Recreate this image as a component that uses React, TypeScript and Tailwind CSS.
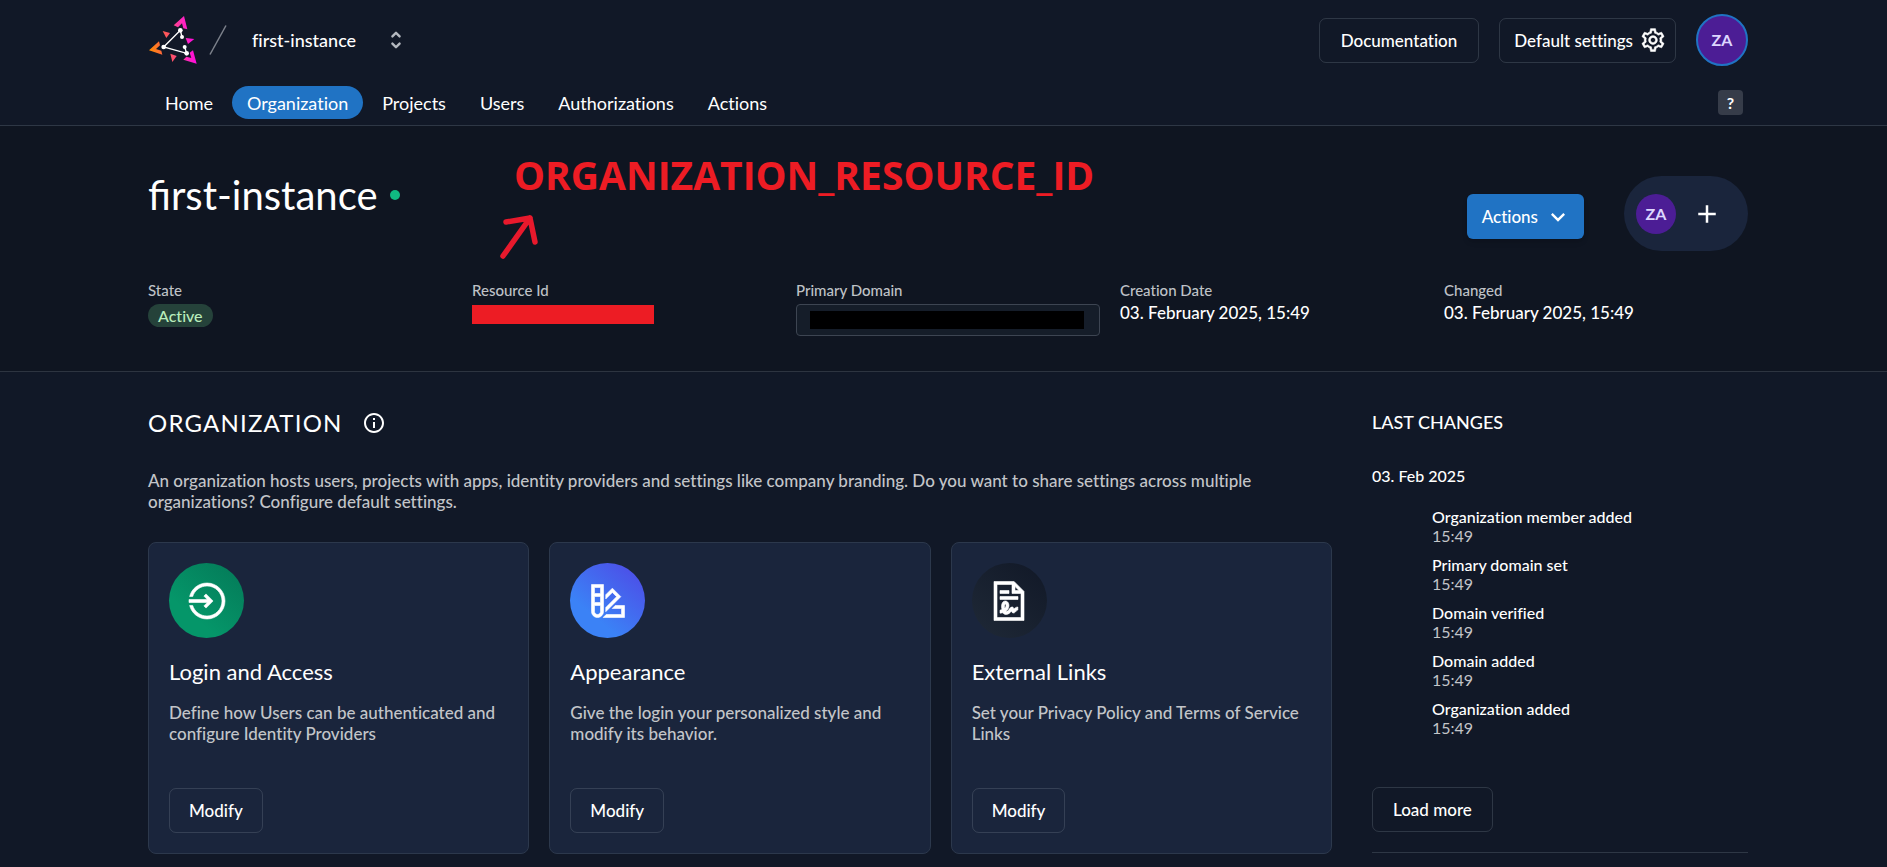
import React from "react";
import { HiSelector } from "react-icons/hi";
import {
  LiaCogSolid,
  LiaFileContractSolid,
  LiaSignInAltSolid,
  LiaSwatchbookSolid,
} from "react-icons/lia";
import { MdAdd, MdInfoOutline, MdKeyboardArrowDown } from "react-icons/md";

const navItems = ["Home", "Organization", "Projects", "Users", "Authorizations", "Actions"];

const changes = [
  "Organization member added",
  "Primary domain set",
  "Domain verified",
  "Domain added",
  "Organization added",
];

const cards = [
  {
    title: "Login and Access",
    text: "Define how Users can be authenticated and configure Identity Providers",
    icon: LiaSignInAltSolid,
    tone: "bg-linear-[40deg,#059669_30%,#047857]",
  },
  {
    title: "Appearance",
    text: "Give the login your personalized style and modify its behavior.",
    icon: LiaSwatchbookSolid,
    tone: "bg-linear-[40deg,#3b82f6_30%,#4f46e5]",
  },
  {
    title: "External Links",
    text: "Set your Privacy Policy and Terms of Service Links",
    icon: LiaFileContractSolid,
    tone: "bg-linear-[40deg,#1f2937,#111827]",
  },
];

function Container({ className = "", children }: { className?: string; children: React.ReactNode }) {
  return (
    <div className="pl-[9px]">
      <div className={`mx-auto w-full max-w-[1600px] ${className}`}>{children}</div>
    </div>
  );
}

function OutlineButton({ className = "px-[19px]", children }: { className?: string; children: React.ReactNode }) {
  return (
    <button
      type="button"
      className={`flex h-[45px] w-fit items-center rounded-[7px] border border-[#8795a1]/25 ${className}`}
    >
      {children}
    </button>
  );
}

function Logo() {
  return (
    <svg viewBox="55 45 150 150" className="size-[50px]" aria-hidden="true">
      <defs>
        <linearGradient id="brand" x1="58" y1="150" x2="201" y2="130" gradientUnits="userSpaceOnUse">
          <stop offset="0" stopColor="#ff8f00" />
          <stop offset="0.35" stopColor="#fe5a4f" />
          <stop offset="0.55" stopColor="#fe4a80" />
          <stop offset="0.75" stopColor="#fe2bb8" />
          <stop offset="1" stopColor="#ff00ea" />
        </linearGradient>
      </defs>
      <g fill="url(#brand)">
        <path d="M163 48 173 88 161 85 157 70 145 82 132 76Z" />
        <path d="M58 151 88 124 91 136 79 147 95 152 98 164Z" />
        <path d="M201 191 161 179 170 170 185 174 180 158 190 151Z" />
        <path d="M99 93 121 99 110 114Z" />
        <path d="M168 114 194 117 175 132Z" />
        <path d="M122 161 141 168 128 186Z" />
      </g>
      <path d="M157 111 152 91 102 141 171 160 165 141" fill="none" stroke="#fff" strokeWidth="4" />
      <g fill="#fff">
        <circle cx="152" cy="91" r="7" />
        <circle cx="157" cy="111" r="6" />
        <circle cx="165" cy="141" r="6" />
        <circle cx="171" cy="160" r="7" />
        <circle cx="102" cy="141" r="7" />
      </g>
    </svg>
  );
}

function Header() {
  return (
    <header className="border-b border-[#8795a1]/25">
      <Container>
        <div className="flex h-20 items-center justify-between">
          <div className="flex items-center">
            <a href="#home" aria-label="Home">
              <Logo />
            </a>
            <svg viewBox="0 0 18 30" className="ml-[11px] h-[30px] w-[18px]" aria-hidden="true">
              <path d="M1 29.500 17 .5" stroke="#7d828c" strokeWidth="1.500" />
            </svg>
            <button type="button" className="ml-[25px] flex items-center gap-7 text-lg">
              first-instance
              <HiSelector className="size-6 text-[#b4b8bf]" />
            </button>
          </div>
          <div className="flex items-center gap-5">
            <OutlineButton className="px-[21px]">Documentation</OutlineButton>
            <OutlineButton className="gap-1.5 pr-2 pl-[14px]">
              Default settings
              <LiaCogSolid className="size-7" stroke="currentColor" strokeWidth="0.7" />
            </OutlineButton>
            <button
              type="button"
              className="flex size-[52px] items-center justify-center rounded-full border-2 border-[#2073c4] bg-[#4c1d95] text-base font-bold text-[#ddd6fe]"
            >
              ZA
            </button>
          </div>
        </div>
        <div className="flex h-[45px] items-center justify-between pr-[5px] pl-[2px]">
          <nav className="flex gap-1 text-lg font-normal">
            {navItems.map((item) => (
              <a
                key={item}
                href={`#${item.toLowerCase()}`}
                className={`flex h-[33px] items-center rounded-full px-[15px] ${item === "Organization" ? "bg-[#2073c4]" : ""}`}
              >
                {item}
              </a>
            ))}
          </nav>
          <button type="button" className="size-[25px] rounded-[4px] bg-[#363c49] text-base font-bold">
            ?
          </button>
        </div>
      </Container>
    </header>
  );
}

function Fact({ label, children }: { label: string; children: React.ReactNode }) {
  return (
    <div className="flex flex-col items-start">
      <dt className="text-[15px] leading-[21px] text-[#bfc2c7]">{label}</dt>
      <dd className="w-full leading-6">{children}</dd>
    </div>
  );
}

function Annotation() {
  return (
    <div className="pointer-events-none absolute top-[22px] left-[352px] text-[#ed1c24]">
      <p className="ml-3.5 font-['Open_Sans',sans-serif] text-[39px] leading-[54px] font-bold">
        ORGANIZATION_RESOURCE_ID
      </p>
      <svg viewBox="0 0 40 46" className="mt-3 h-[46px] w-10" aria-hidden="true">
        <path d="M3 42 30 4M6 8 30 4 35 28" fill="none" stroke="#e8192c" strokeWidth="5.500" strokeLinecap="round" strokeLinejoin="round" />
      </svg>
    </div>
  );
}

function Hero() {
  return (
    <section className="border-b border-[#8795a1]/25 bg-[#0f1521]">
      <Container className="relative h-[245px] pt-[50px]">
        <div className="flex h-[75px] justify-between">
          <h1 className="flex h-[38px] items-center gap-3 text-[40px] leading-10 font-normal [font-variant-ligatures:normal]">
            first-instance
            <span className="size-2.5 rounded-full bg-[#10b981]" />
          </h1>
          <div className="flex items-center gap-10">
            <button
              type="button"
              className="mt-1.5 flex h-[45px] items-center gap-1.5 rounded-[6px] bg-[#2073c4] pr-3 pl-[15px] shadow-md"
            >
              Actions
              <MdKeyboardArrowDown className="size-7" />
            </button>
            <div className="flex h-[75px] w-[124px] items-center gap-4 rounded-full bg-[#1a253c] pl-3">
              <span className="flex size-10 items-center justify-center rounded-full bg-[#4c1d95] text-base font-bold text-[#ddd6fe]">
                ZA
              </span>
              <button type="button" aria-label="Add member">
                <MdAdd className="size-[30px]" />
              </button>
            </div>
          </div>
        </div>
        <dl className="mt-[29px] grid grid-cols-5 gap-5">
          <Fact label="State">
            <span className="mt-[3px] flex h-[23px] w-fit items-center rounded-full bg-[#25423a] px-2.5 text-base text-[#b9ecbb]">
              Active
            </span>
          </Fact>
          <Fact label="Resource Id">
            <span className="mt-1 block h-[19px] w-[182px] bg-[#ed1c24]" />
          </Fact>
          <Fact label="Primary Domain">
            <span className="mt-[3px] flex h-8 items-center rounded-[4px] border border-[#3d4552] bg-[#151d29] pr-[15px] pl-[13px]">
              <span className="h-[18px] w-full bg-black" />
            </span>
          </Fact>
          <Fact label="Creation Date">03. February 2025, 15:49</Fact>
          <Fact label="Changed">03. February 2025, 15:49</Fact>
        </dl>
        <Annotation />
      </Container>
    </section>
  );
}

export default function App() {
  return (
    <div className="min-h-screen bg-[#111827] font-[Lato,sans-serif] text-[17px] leading-[21px] font-medium text-white [font-variant-ligatures:none]">
      <Header />
      <Hero />
      <Container className="flex gap-10 pb-3">
        <main className="flex-1 pt-[39px]">
          <div className="flex items-center gap-[19px]">
            <h2 className="text-2xl leading-6 font-normal tracking-wider">ORGANIZATION</h2>
            <MdInfoOutline className="size-6" />
          </div>
          <p className="mt-[35px] text-[#c3c5c9]">
            An organization hosts users, projects with apps, identity providers and settings like company branding. Do
            you want to share settings across multiple organizations? Configure default settings.
          </p>
          <div className="mt-[30px] grid grid-cols-3 gap-5">
            {cards.map(({ title, text, icon: Icon, tone }) => (
              <article
                key={title}
                className="flex h-[312px] flex-col rounded-[8px] border border-[#2c384c] bg-[#1a253c] p-5"
              >
                <span className={`flex size-[75px] items-center justify-center rounded-full ${tone}`}>
                  <Icon className="size-12" stroke="currentColor" strokeWidth="0.4" />
                </span>
                <h3 className="mt-[22px] text-[22px] leading-6 font-normal">{title}</h3>
                <p className="mt-[18px] text-[#c3c5c9]">{text}</p>
                <div className="mt-auto">
                  <OutlineButton>Modify</OutlineButton>
                </div>
              </article>
            ))}
          </div>
        </main>
        <aside className="w-[376px] pt-[38px]">
          <h2 className="text-lg leading-6">LAST CHANGES</h2>
          <h3 className="mt-8 text-base leading-[19px]">03. Feb 2025</h3>
          <ul className="mt-[22px] flex flex-col gap-2.5 pl-[60px] text-base leading-[19px]">
            {changes.map((change) => (
              <li key={change}>
                <p>{change}</p>
                <p className="font-normal text-[#c3c5c9]">15:49</p>
              </li>
            ))}
          </ul>
          <div className="mt-[50px] border-b border-[#8795a1]/25 pb-5">
            <OutlineButton className="px-5">Load more</OutlineButton>
          </div>
        </aside>
      </Container>
    </div>
  );
}
